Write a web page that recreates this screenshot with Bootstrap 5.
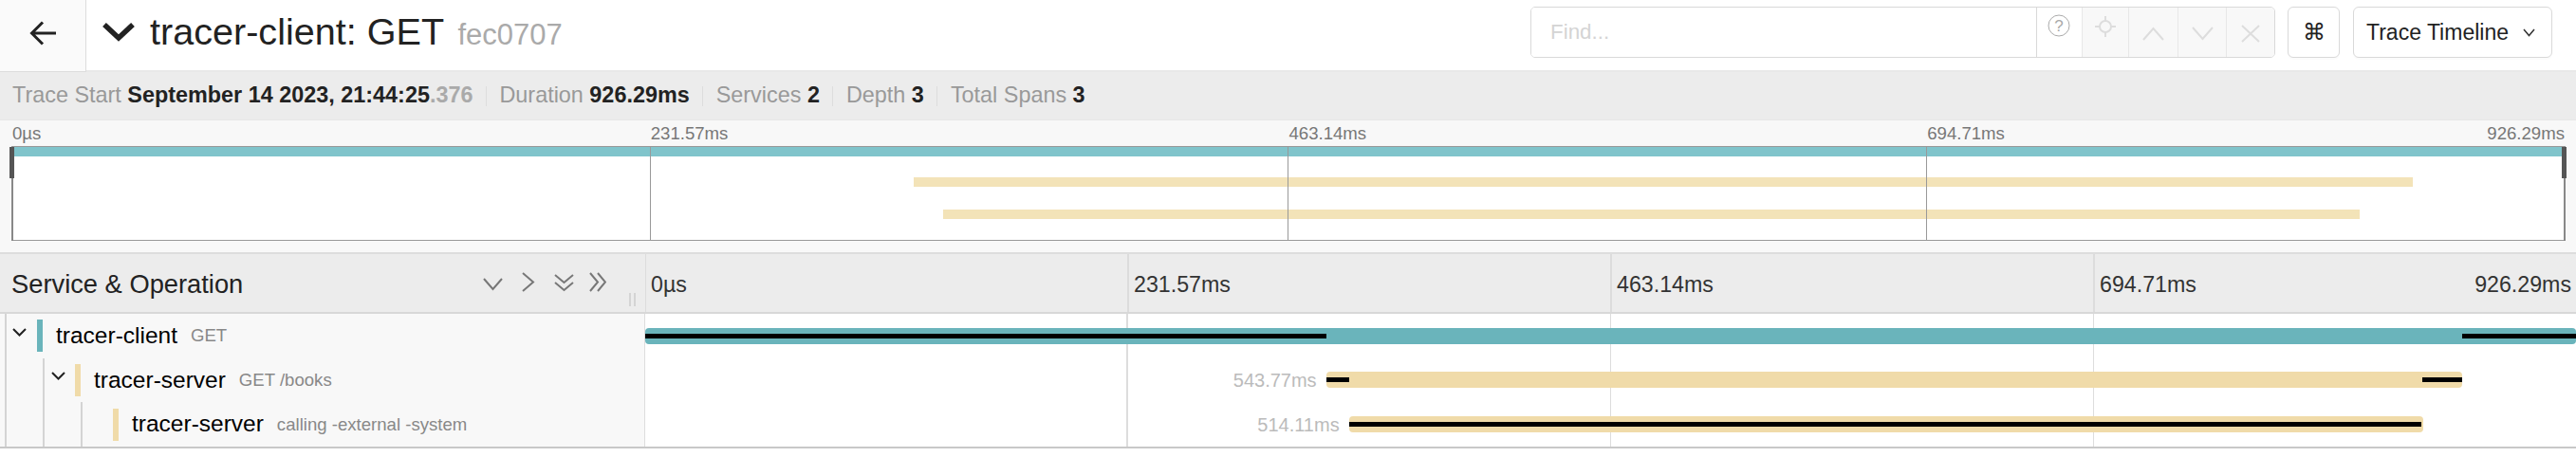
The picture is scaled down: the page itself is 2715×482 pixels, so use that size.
<!DOCTYPE html>
<html lang="en">
<head>
  <meta charset="UTF-8">
  <title>tracer-client: GET</title>
  <link href="https://cdn.jsdelivr.net/npm/bootstrap@5.3.0/dist/css/bootstrap.min.css" rel="stylesheet">
  <style>
    body { background: #fff; color: #222; font-family: "Liberation Sans", Arial, sans-serif; overflow: hidden; }
    svg { display: block; flex: none; }

    .top-head { height: 76px; border-bottom: 2px solid #e8e8e8; }
    .back-btn { width: 91px; height: 76px; padding-bottom: 5px; background: #fafafa; border-right: 1px solid #ddd; border-bottom: 1px solid #ddd; flex: none; }
    .collapse-ico { margin: 0 16px 6px 17px; }
    .trace-name { font-size: 39.6px; font-weight: 400; margin: 0 0 6px; line-height: 1; white-space: nowrap; }
    .trace-id { font-size: 31px; color: #aaa; margin-left: 4px; }

    .find-box { width: 785px; height: 54px; margin-top: 7px; border: 1px solid #d9d9d9; border-radius: 5px; overflow: hidden; }
    .find-box input { border: 0; outline: 0; flex: 1; min-width: 0; padding: 0 20px; font-size: 22.4px; }
    .find-box input::placeholder { color: #d4d4d4; }
    .find-help { width: 48px; border-left: 1px solid #d9d9d9; padding-top: 7px; padding-left: 11px; }
    .find-act { background: #f8f8f8; border-left: 1px solid #e8e8e8; }
    .act-target { width: 49px; padding-top: 9px; }
    .act-up { width: 52px; padding-top: 20px; }
    .act-down { width: 51px; padding-top: 20px; }
    .act-close { width: 51px; padding-top: 18px; }
    .tool-btn { height: 54px; margin-top: 7px; border: 1px solid #d9d9d9; border-radius: 6px; box-shadow: 0 2px 0 rgba(0,0,0,.015); background: #fff; font-size: 23px; color: #222; padding: 0; }
    .kbd-btn { width: 55px; margin-left: 13px; font-size: 24px; }
    .view-btn { width: 210px; margin-left: 14px; margin-right: 25px; padding-left: 13px; gap: 15px; }

    .meta-bar { height: 50px; background: #ececec; font-size: 23.4px; padding-left: 13px; white-space: nowrap; }
    .meta-item { color: #999; }
    .meta-item b { color: #222; }
    .meta-item b span { color: #aaa; }
    .meta-sep { width: 1px; height: 21px; background: #ddd; margin: 0 13.5px; }

    .mini-wrap { height: 142px; background: #f8f8f8; border-top: 1px solid #e6e6e6; border-bottom: 2px solid #ddd; padding: 0 12px; }
    .mini-ticks { height: 27px; font-size: 18.6px; color: #777; }
    .mini-ticks > div { flex: 1 1 0; padding-left: 1px; line-height: 27px; }
    .mini-canvas { overflow: visible; }

    .tl-head { height: 63px; background: #ececec; border-bottom: 2px solid #d8d8d8; }
    .svc-col { width: 680px; flex: none; }
    .svc-title { font-size: 27.3px; padding: 4px 0 0 12px; flex: 1; }
    .head-tools { margin: -2px 41px 0 0; }
    .tl-ticks { flex: 1; min-width: 0; }
    .tl-ticks > div { flex: 1 1 0; border-left: 2px solid #dcdcdc; padding: 4px 5px 0; font-size: 23.2px; color: #333; }
    .tl-ticks > div:first-child { border-left-width: 1px; }
    .resize-grip { position: absolute; left: 663px; top: 309px; width: 7px; height: 14px; border-left: 2px solid #d4d4d4; border-right: 2px solid #d4d4d4; }

    .span-row { height: 46.67px; }
    .span-rows { border-bottom: 2px solid #c8c8c8; }
    .span-left { width: 679.5px; flex: none; background: #f8f8f8; border-right: 1px solid #ddd; }
    .tree-line { width: 2px; background: #d4d4d4; align-self: stretch; flex: none; margin-left: 38px; }
    .tree-line.first { margin-left: 5px; }
    .caret-box { width: 32px; flex: none; padding-left: 6px; margin-top: -8px; }
    .caret-box.deep { padding-left: 7px; }
    .svc-tag { width: 6px; height: 34px; flex: none; margin-right: 14px; }
    .svc-tag.leaf { margin-left: 32px; }
    .svc-name { font-size: 24.5px; color: #000; white-space: nowrap; }
    .op-name { font-size: 18.6px; color: #888; margin-left: 14px; white-space: nowrap; }

    .grid-cells { flex: 1; min-width: 0; position: relative; }
    .grid-lines { position: absolute; inset: 0; display: flex; }
    .grid-lines i { flex: 1 1 0; border-left: 1px solid #ddd; }
    .grid-lines i:first-child { border-left: 0; }
    .grid-lines i:nth-child(2) { border-left-width: 2px; }
    .bar-line { position: relative; height: 100%; }
    .bar-label { text-align: right; font-size: 20px; color: #bbb; padding-right: 10px; white-space: nowrap; margin-top: 1px; }
    .dur-bar { height: 17px; border-radius: 4px; overflow: hidden; }
    .blk-row { height: 5px; margin-top: 6px; }
    .blk-row i { background: #000; height: 5px; display: block; }
    .svc-blue { background: #6ab4bb; }
    .svc-sand { background: #f0dba9; }
  </style>
</head>
<body>
  <!-- top header -->
  <div class="top-head d-flex">
    <div class="back-btn d-flex align-items-center justify-content-center">
      <svg width="28" height="26" viewBox="0 0 28 26" fill="none" stroke="#222" stroke-width="3"><path d="M14 1.500 2.500 13 14 24.500M3 13h25"/></svg>
    </div>
    <svg class="collapse-ico align-self-center" width="34" height="20" viewBox="0 0 34 20" fill="none" stroke="#222" stroke-width="5.500"><path d="M2 2l15 14L32 2"/></svg>
    <h1 class="trace-name align-self-center">tracer-client: GET <small class="trace-id">fec0707</small></h1>
    <div class="find-box d-flex ms-auto">
      <input type="text" placeholder="Find...">
      <div class="find-help">
        <svg width="24" height="24" viewBox="0 0 24 24" fill="none" stroke="#aaa" stroke-width="1"><circle cx="12" cy="12" r="11"/><text x="12" y="18" text-anchor="middle" font-size="17" fill="#aaa" stroke="none" font-family="Liberation Sans">?</text></svg>
      </div>
      <div class="find-act act-target d-flex align-items-start justify-content-center">
        <svg width="22" height="22" viewBox="0 0 22 22" fill="none" stroke="#ddd" stroke-width="2"><circle cx="11" cy="11" r="6"/><path d="M11 0v5M11 17v5M0 11h5M17 11h5"/></svg>
      </div>
      <div class="find-act act-up d-flex align-items-start justify-content-center">
        <svg width="23" height="15" viewBox="0 0 23 15" fill="none" stroke="#ddd" stroke-width="2"><path d="M1 14 11.500 2 22 14"/></svg>
      </div>
      <div class="find-act act-down d-flex align-items-start justify-content-center">
        <svg width="23" height="15" viewBox="0 0 23 15" fill="none" stroke="#ddd" stroke-width="2"><path d="M1 1 11.500 13 22 1"/></svg>
      </div>
      <div class="find-act act-close d-flex align-items-start justify-content-center">
        <svg width="20" height="19" viewBox="0 0 20 19" fill="none" stroke="#ddd" stroke-width="2"><path d="M1 1l18 17M19 1 1 18"/></svg>
      </div>
    </div>
    <button class="tool-btn kbd-btn" type="button">⌘</button>
    <button class="tool-btn view-btn d-flex align-items-center" type="button">Trace Timeline
      <svg width="13" height="9" viewBox="0 0 13 9" fill="none" stroke="#333" stroke-width="1.500"><path d="M1 1l5.500 6.500L12 1"/></svg>
    </button>
  </div>

  <!-- trace meta -->
  <div class="meta-bar d-flex align-items-center">
    <div class="meta-item">Trace Start <b>September 14 2023, 21:44:25<span>.376</span></b></div>
    <div class="meta-sep"></div>
    <div class="meta-item">Duration <b>926.29ms</b></div>
    <div class="meta-sep"></div>
    <div class="meta-item">Services <b>2</b></div>
    <div class="meta-sep"></div>
    <div class="meta-item">Depth <b>3</b></div>
    <div class="meta-sep"></div>
    <div class="meta-item">Total Spans <b>3</b></div>
  </div>

  <!-- minimap -->
  <div class="mini-wrap">
    <div class="mini-ticks d-flex">
      <div>0µs</div>
      <div>231.57ms</div>
      <div>463.14ms</div>
      <div class="d-flex justify-content-between"><span>694.71ms</span><span>926.29ms</span></div>
    </div>
    <svg class="mini-canvas" width="2693" height="100" viewBox="0 0 2693 100">
      <rect x="0.500" y="0.500" width="2691" height="99" fill="#fff" stroke="#999"/>
      <rect x="1" y="1" width="2689" height="10" fill="#80c4cb"/>
      <rect x="951" y="33" width="1580" height="10" fill="#f3e3b8"/>
      <rect x="982" y="67" width="1493" height="10" fill="#f3e3b8"/>
      <path d="M673.500 0v100M1345.500 0v100M2018.500 0v100" stroke="#999"/>
      <path d="M1 1v99M2691 1v99" stroke="#888" stroke-width="2"/>
      <rect x="-2" y="1" width="5" height="33" fill="#555"/>
      <rect x="2688" y="1" width="5" height="33" fill="#555"/>
    </svg>
  </div>

  <!-- timeline header -->
  <div class="tl-head d-flex">
    <div class="svc-col d-flex align-items-center">
      <div class="svc-title">Service &amp; Operation</div>
      <svg class="head-tools" width="130" height="22" viewBox="0 0 130 22" fill="none" stroke="#777" stroke-width="2">
        <path d="M1 7l9.500 11L20 7"/>
        <path d="M42 1l11 9.500L42 20"/>
        <path d="M76 3l9.500 8L95 3M76 11l9.500 8L95 11"/>
        <path d="M113 1l8 9.500-8 9.500M121 1l8 9.500-8 9.500"/>
      </svg>
    </div>
    <div class="resize-grip"></div>
    <div class="tl-ticks d-flex">
      <div class="d-flex align-items-center">0µs</div>
      <div class="d-flex align-items-center">231.57ms</div>
      <div class="d-flex align-items-center">463.14ms</div>
      <div class="d-flex align-items-center justify-content-between"><span>694.71ms</span><span>926.29ms</span></div>
    </div>
  </div>

  <!-- span rows -->
  <div class="span-rows">
    <div class="span-row d-flex">
      <div class="span-left d-flex align-items-center">
        <div class="tree-line first"></div>
        <div class="caret-box d-flex"><svg width="15" height="9" viewBox="0 0 15 9" fill="none" stroke="#222" stroke-width="2"><path d="M1 1l6.500 6.500L14 1"/></svg></div>
        <div class="svc-tag svc-blue"></div>
        <span class="svc-name">tracer-client</span><span class="op-name">GET</span>
      </div>
      <div class="grid-cells">
        <div class="grid-lines"><i></i><i></i><i></i><i></i></div>
        <div class="bar-line d-flex align-items-center">
          <div class="dur-bar svc-blue" style="width:100%">
            <div class="blk-row d-flex justify-content-between"><i style="width:35.28%"></i><i style="width:5.9%"></i></div>
          </div>
        </div>
      </div>
    </div>
    <div class="span-row d-flex">
      <div class="span-left d-flex align-items-center">
        <div class="tree-line first"></div>
        <div class="tree-line"></div>
        <div class="caret-box deep d-flex"><svg width="15" height="9" viewBox="0 0 15 9" fill="none" stroke="#222" stroke-width="2"><path d="M1 1l6.500 6.500L14 1"/></svg></div>
        <div class="svc-tag svc-sand"></div>
        <span class="svc-name">tracer-server</span><span class="op-name">GET /books</span>
      </div>
      <div class="grid-cells">
        <div class="grid-lines"><i></i><i></i><i></i><i></i></div>
        <div class="bar-line d-flex align-items-center">
          <div class="bar-label" style="width:35.28%">543.77ms</div>
          <div class="dur-bar svc-sand" style="width:58.82%">
            <div class="blk-row d-flex justify-content-between"><i style="width:2%"></i><i style="width:3.5%"></i></div>
          </div>
        </div>
      </div>
    </div>
    <div class="span-row d-flex">
      <div class="span-left d-flex align-items-center">
        <div class="tree-line first"></div>
        <div class="tree-line"></div>
        <div class="tree-line"></div>
        <div class="svc-tag leaf svc-sand"></div>
        <span class="svc-name">tracer-server</span><span class="op-name">calling -external -system</span>
      </div>
      <div class="grid-cells">
        <div class="grid-lines"><i></i><i></i><i></i><i></i></div>
        <div class="bar-line d-flex align-items-center">
          <div class="bar-label" style="width:36.46%">514.11ms</div>
          <div class="dur-bar svc-sand" style="width:55.63%">
            <div class="blk-row"><i style="width:99.8%"></i></div>
          </div>
        </div>
      </div>
    </div>
  </div>

  <script src="https://cdn.jsdelivr.net/npm/bootstrap@5.3.0/dist/js/bootstrap.bundle.min.js"></script>
</body>
</html>
